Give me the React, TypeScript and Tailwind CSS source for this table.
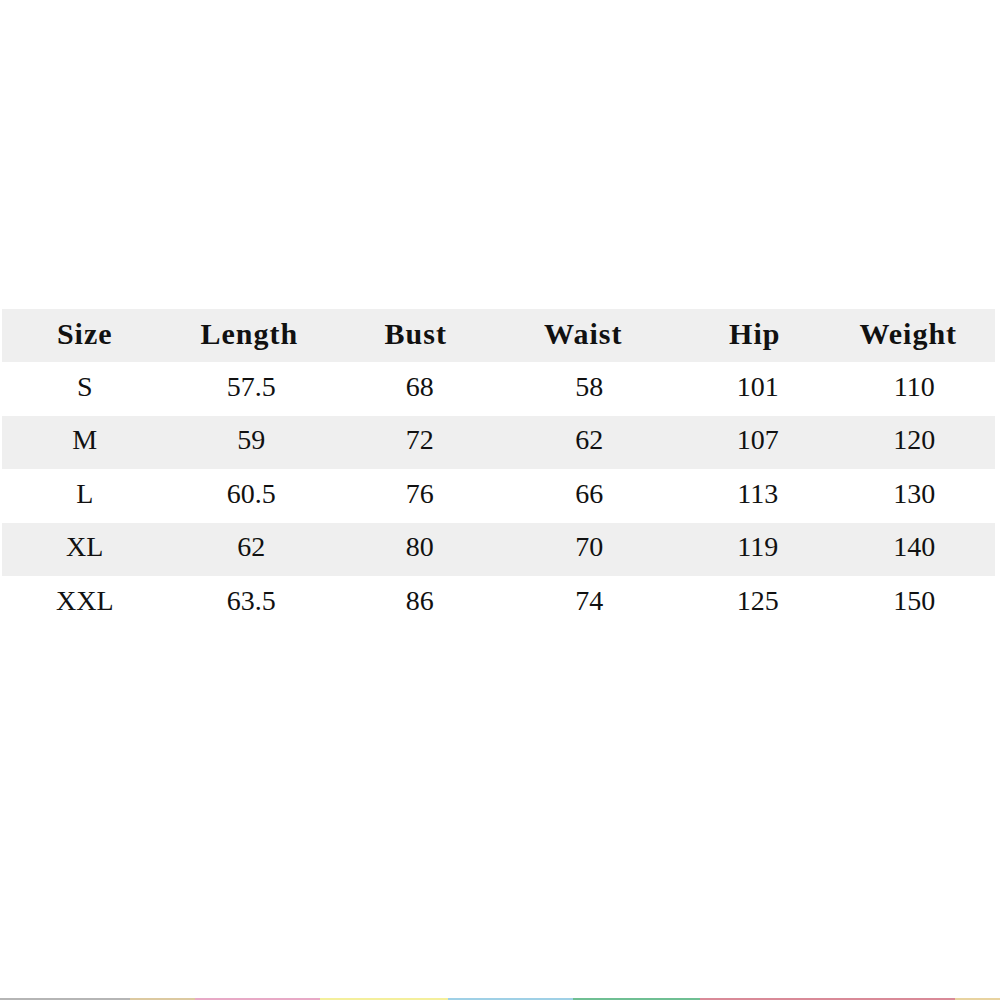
import React from "react";

const headers = ["Size", "Length", "Bust", "Waist", "Hip", "Weight"];
const rows = [
  ["S", "57.5", "68", "58", "101", "110"],
  ["M", "59", "72", "62", "107", "120"],
  ["L", "60.5", "76", "66", "113", "130"],
  ["XL", "62", "80", "70", "119", "140"],
  ["XXL", "63.5", "86", "74", "125", "150"],
];

const hdrOffsets = ["ml-[0px]", "ml-[-2px]", "ml-[0px]", "ml-[4px]", "ml-[16px]", "ml-[-8px]"];
const dataOffsets = ["ml-[0px]", "ml-[2px]", "ml-[8px]", "ml-[16px]", "ml-[22px]", "ml-[4px]"];

const strip = [
  { w: "w-[130px]", c: "bg-[#b5b5b5]" },
  { w: "w-[65px]", c: "bg-[#dcc9a0]" },
  { w: "w-[125px]", c: "bg-[#e8a9c6]" },
  { w: "w-[128px]", c: "bg-[#f4ef9c]" },
  { w: "w-[125px]", c: "bg-[#9fd0e6]" },
  { w: "w-[127px]", c: "bg-[#6fbf93]" },
  { w: "w-[255px]", c: "bg-[#d98a98]" },
  { w: "flex-1", c: "bg-[#e8d3a0]" },
];

export default function App() {
  return (
    <div className="w-[1000px] h-[1000px] bg-white flex flex-col" style={{ fontFamily: '"Liberation Serif", "Times New Roman", serif' }}>
      <div className="pt-[309px] pl-[2px] pr-[5px]">
        <div className="grid grid-cols-6 h-[53px] bg-[#efefef] items-center">
          {headers.map((h, i) => (
            <div key={h} className={`text-center font-bold text-[30px] tracking-[1px] text-[#111] leading-none -mt-[4px] ${hdrOffsets[i]}`}>
              {h}
            </div>
          ))}
        </div>
        {rows.map((r, ri) => (
          <div
            key={r[0]}
            className={`grid grid-cols-6 h-[53.5px] items-center ${ri % 2 === 1 ? "bg-[#efefef]" : "bg-white"}`}
          >
            {r.map((v, i) => (
              <div key={i} className={`text-center text-[28px] text-[#111] leading-none -mt-[4px] ${dataOffsets[i]}`}>
                {v}
              </div>
            ))}
          </div>
        ))}
      </div>
      <div className="mt-auto flex h-[2px]">
        {strip.map((s, i) => (
          <div key={i} className={`${s.w} ${s.c} h-full`} />
        ))}
      </div>
    </div>
  );
}
